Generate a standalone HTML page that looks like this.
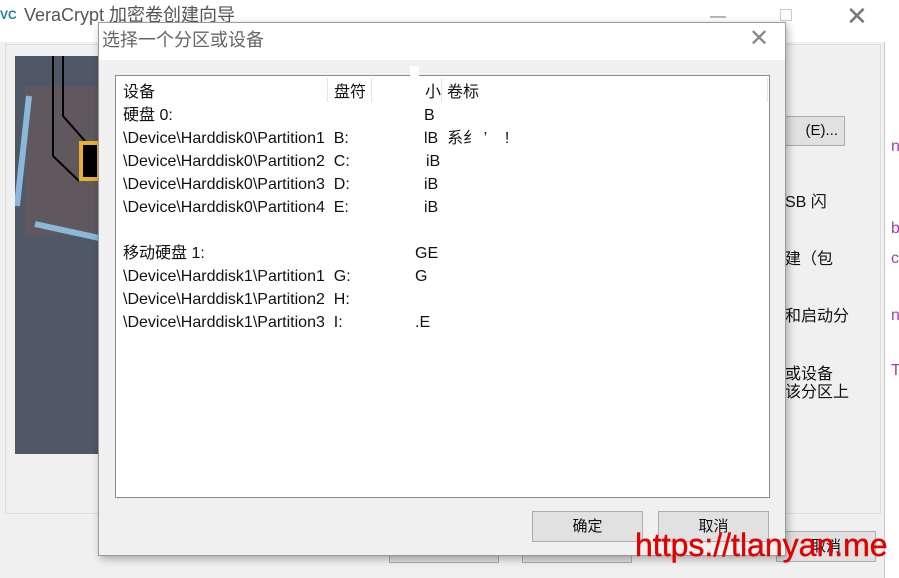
<!DOCTYPE html>
<html><head><meta charset="utf-8"><style>
*{margin:0;padding:0;box-sizing:border-box}
body{width:899px;height:578px;overflow:hidden;background:#fff;position:relative;font-family:"Liberation Sans","Noto Sans CJK SC",sans-serif;color:#111}
.a{position:absolute;white-space:nowrap;line-height:1.15}
.btn{position:absolute;background:#e1e1e1;border:1px solid #adadad;text-align:center;font-size:15px;color:#111}
.row{position:absolute;left:123px;font-size:16px;line-height:18px;white-space:nowrap}
.c{position:absolute;font-size:16px;line-height:18px;white-space:nowrap}
</style></head><body>
<div class="a" style="left:0;top:0;width:885px;height:578px;background:#f0f0f0;border-right:1px solid #c8c8c8"></div>
<div class="a" style="left:0;top:0;width:885px;height:42px;background:#fff"></div>
<div class="a" style="left:0;top:9px;font-size:12px;font-weight:bold;color:#1a7fa0">VC</div>
<div class="a" style="left:24px;top:5px;font-size:18px;color:#555">VeraCrypt 加密卷创建向导</div>
<div class="a" style="left:710px;top:8px;font-size:16px;color:#777">—</div>
<div class="a" style="left:780px;top:9px;width:12px;height:12px;border:1px solid #ccc"></div>
<div class="a" style="left:846px;top:2px;font-size:26px;color:#777">✕</div>
<div class="a" style="left:5px;top:44px;width:876px;height:470px;border:1px solid #dcdcdc"></div>
<div class="a" style="left:15px;top:56px;width:90px;height:398px;background:#4f5866"></div>
<svg class="a" style="left:15px;top:56px" width="84" height="200">
<rect x="10" y="30" width="74" height="150" fill="#6a5a5a" opacity=".6"/>
<line x1="14" y1="40" x2="2" y2="150" stroke="#8ab8d8" stroke-width="6"/>
<line x1="20" y1="168" x2="84" y2="182" stroke="#8ab8d8" stroke-width="6"/>
<polyline points="48,0 48,60 70,85" fill="none" stroke="#000" stroke-width="2"/>
<polyline points="38,0 38,100 64,125" fill="none" stroke="#000" stroke-width="2"/>
<rect x="66" y="87" width="18" height="36" fill="#000" stroke="#e8b030" stroke-width="4"/>
</svg>
<div class="btn" style="left:770px;top:116px;width:75px;height:30px;line-height:28px;text-align:right;padding-right:6px">(E)...</div>
<div class="a" style="left:785px;top:194px;font-size:16px">SB 闪</div>
<div class="a" style="left:785px;top:251px;font-size:16px">建（包</div>
<div class="a" style="left:785px;top:308px;font-size:16px">和启动分</div>
<div class="a" style="left:785px;top:366px;font-size:16px;line-height:18px">或设备<br>该分区上</div>
<div class="a" style="left:891px;top:138px;font-size:16px;color:#a040a0">n</div>
<div class="a" style="left:891px;top:220px;font-size:16px;color:#a040a0">b</div>
<div class="a" style="left:891px;top:250px;font-size:16px;color:#a040a0">c</div>
<div class="a" style="left:891px;top:307px;font-size:16px;color:#a040a0">n</div>
<div class="a" style="left:891px;top:362px;font-size:16px;color:#a040a0">T</div>
<div class="btn" style="left:389px;top:533px;width:110px;height:30px"></div>
<div class="btn" style="left:522px;top:533px;width:110px;height:30px"></div>
<div class="btn" style="left:776px;top:531px;width:100px;height:31px;line-height:30px">取消</div>
<!-- dialog -->
<div class="a" style="left:98px;top:22px;width:688px;height:534px;background:#f0f0f0;border:1px solid #9a9a9a;box-shadow:2px 3px 8px rgba(0,0,0,.3)"></div>
<div class="a" style="left:99px;top:23px;width:686px;height:37px;background:#fff"></div>
<div class="a" style="left:102px;top:30px;font-size:18px;color:#666">选择一个分区或设备</div>
<div class="a" style="left:749px;top:25px;font-size:24px;color:#888">✕</div>
<div class="a" style="left:115px;top:75px;width:655px;height:423px;background:#fff;border:1px solid #8c8c8c"></div>
<div class="a" style="left:327px;top:78px;width:1px;height:24px;background:#e4e4e4"></div>
<div class="a" style="left:371px;top:78px;width:1px;height:24px;background:#e4e4e4"></div>
<div class="a" style="left:441px;top:78px;width:1px;height:24px;background:#e4e4e4"></div>
<div class="a" style="left:767px;top:78px;width:1px;height:24px;background:#e4e4e4"></div>
<div class="a" style="left:410px;top:66px;width:9px;height:14px;background:#fff"></div>
<div class="row" style="top:84px">设备</div>
<div class="c" style="left:334px;top:84px">盘符</div>
<div class="c" style="left:425px;top:84px">小</div>
<div class="c" style="left:447px;top:84px">卷标</div>
<div class="row" style="top:107px">硬盘 0:</div>
<div class="row" style="top:130px">\Device\Harddisk0\Partition1&nbsp;&nbsp;B:</div>
<div class="row" style="top:153px">\Device\Harddisk0\Partition2&nbsp;&nbsp;C:</div>
<div class="row" style="top:176px">\Device\Harddisk0\Partition3&nbsp;&nbsp;D:</div>
<div class="row" style="top:199px">\Device\Harddisk0\Partition4&nbsp;&nbsp;E:</div>
<div class="row" style="top:245px">移动硬盘 1:</div>
<div class="row" style="top:268px">\Device\Harddisk1\Partition1&nbsp;&nbsp;G:</div>
<div class="row" style="top:291px">\Device\Harddisk1\Partition2&nbsp;&nbsp;H:</div>
<div class="row" style="top:314px">\Device\Harddisk1\Partition3&nbsp;&nbsp;I:</div>
<div class="c" style="left:424px;top:107px">B</div>
<div class="c" style="left:424px;top:130px">lB&nbsp;&nbsp;系纟 ’&nbsp;&nbsp;&nbsp;&nbsp;!</div>
<div class="c" style="left:426px;top:153px">iB</div>
<div class="c" style="left:424px;top:176px">iB</div>
<div class="c" style="left:424px;top:199px">iB</div>
<div class="c" style="left:415px;top:245px">GE</div>
<div class="c" style="left:415px;top:268px">G</div>
<div class="c" style="left:415px;top:314px">.E</div>
<div class="btn" style="left:532px;top:511px;width:111px;height:31px;line-height:30px">确定</div>
<div class="btn" style="left:658px;top:511px;width:111px;height:31px;line-height:30px">取消</div>
<div class="a" style="left:635px;top:527px;font-size:32px;color:#e00000;letter-spacing:0px;-webkit-text-stroke:0.4px #e00000">https://tlanyan.me</div>
</body></html>
